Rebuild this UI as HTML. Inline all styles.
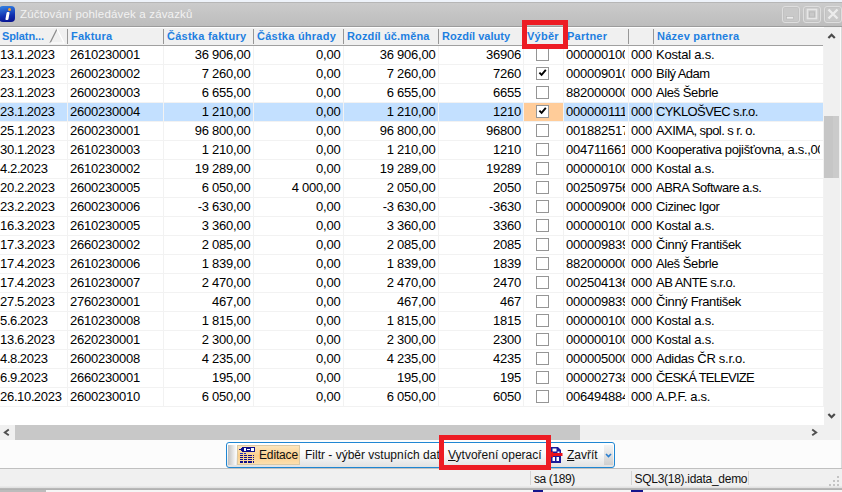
<!DOCTYPE html>
<html><head><meta charset="utf-8">
<style>
html,body{margin:0;padding:0;}
body{width:842px;height:492px;overflow:hidden;position:relative;background:#fff;font-family:"Liberation Sans",sans-serif;font-size:13px;letter-spacing:-0.23px;color:#000;}
#title{position:absolute;left:0;top:0;width:842px;height:27px;background:linear-gradient(#eef3fa 0,#eef3fa 2px,#b6b6b6 2px,#b6b6b6 3px,#cbcbcb 3px,#c4c4c4 14px,#bdbdbd 26px,#9c9c9c 26px,#9c9c9c 27px);}
#title .t{position:absolute;left:20px;top:7.5px;font-size:11.5px;color:#f2f2f2;letter-spacing:0.17px;white-space:nowrap;}
#ico{position:absolute;left:-1px;top:6px;width:16px;height:16px;border-radius:4px;background:linear-gradient(170deg,#2f78dc 10%,#1030b0 60%,#08108c);}
#ico b{position:absolute;left:9px;top:2px;width:3px;height:3px;background:#f6a02c;border-radius:2px;}
#ico u{position:absolute;left:7px;top:6px;width:3px;height:8px;background:#fff;transform:skewX(-10deg);border-radius:1px;}
.wb{position:absolute;top:6px;width:18px;height:17px;border:1px solid #dedede;border-radius:3px;background:#c9c9c9;box-sizing:border-box;box-shadow:inset 0 0 0 1px #c2c2c2;}
.wb svg{position:absolute;left:0;top:0;}
#grid{position:absolute;left:0;top:27px;width:824px;height:398px;background:#fff;overflow:hidden;}
.h{position:absolute;top:0px;height:19px;border-top:1px solid #fff;background:#f0f0f0;box-sizing:border-box;font-weight:bold;font-size:11px;letter-spacing:0.25px;color:#1e7fe0;white-space:nowrap;overflow:hidden;}
.h span{position:absolute;left:3px;top:2px;}
.h.last:after{display:none}
.h:after{content:"";position:absolute;right:0;top:1px;width:1px;height:15px;background:#979797;}
.row{position:absolute;left:0;width:823px;height:19px;margin-top:-27px;}
.c{position:absolute;top:0;height:19px;box-sizing:border-box;border-right:1px solid #f2f2f2;border-bottom:1px solid #f2f2f2;white-space:nowrap;overflow:hidden;}
.c span{position:absolute;top:1px;}
.c s{text-decoration:none;letter-spacing:-0.7px;}
.c.al span{left:2px;right:3px;overflow:hidden;}
.c.ar span{right:2.5px;}
.sel .c{background:#c3e0ff;}
.sel .c.foc{background:#ffcc99;}
.cb{position:absolute;left:12px;top:2px;width:13px;height:13px;box-sizing:border-box;border:1px solid #959595;background:#fff;}
.sel .cb,.cbw{background:#fff;}
.cb svg{position:absolute;left:0px;top:0px;}
.sort{position:absolute;left:49px;top:1px;}
#hline{position:absolute;left:0;top:18px;width:823px;height:1px;background:#a0a0a0;}
#vs{position:absolute;left:824px;top:27px;width:18px;height:398px;background:#f0f0f0;}
#vs .th{position:absolute;left:0px;top:89px;width:15px;height:62px;background:linear-gradient(90deg,#c6c6c6 0,#c6c6c6 9px,#cbcbcb 9px);}
#hs{position:absolute;left:0;top:425px;width:842px;height:15px;background:#f0f0f0;}
#hs .th{position:absolute;left:15px;top:0;width:565px;height:15px;background:#c8c8c8;}
#bar{position:absolute;left:0;top:440px;width:842px;height:28px;background:#fcfcfc;}
#status{position:absolute;left:0;top:468px;width:842px;height:19px;background:#f0f0f0;border-top:1px solid #c0c0c0;box-sizing:border-box;font-size:13px;}
#bot{position:absolute;left:0;top:486px;width:842px;height:6px;background:linear-gradient(#ececec 0,#dedede 2px,#b8b8b8 2.5px,#b0b0b0 3.7px,#f6f6f6 4px,#f6f6f6 6px);}
#bot i{position:absolute;top:4px;height:2px;background:#14148c;}

#tb{position:absolute;left:226px;top:442px;width:389px;height:26px;box-sizing:border-box;border:1px solid #1f86d2;border-radius:3px;background:linear-gradient(#ffffff 0,#fbfbfb 40%,#e2e2e2 100%);font-size:12px;letter-spacing:0;}
#tb .grip{position:absolute;left:1px;top:2px;width:8px;height:20px;background:linear-gradient(90deg,#c0c0c0,#fafafa);}
#tb .ed{position:absolute;left:10px;top:2px;width:63px;height:20px;box-sizing:border-box;border:1px solid #d9c9a6;background:linear-gradient(#fde6bd 0,#fbcf8c 55%,#fddfae 100%);}
#tb .tx{position:absolute;top:5px;white-space:nowrap;color:#111;}
#tb u{text-decoration:underline;}
#tb .dd{position:absolute;left:377px;top:2px;width:9px;height:20px;background:linear-gradient(#f4f4f4,#cfcfcf);}
#status .sep{position:absolute;top:2px;width:1px;height:14px;background:#d4d4d4;}
#status .tx{position:absolute;top:3px;white-space:nowrap;font-size:12px;letter-spacing:0;color:#111;}

.red{position:absolute;box-sizing:border-box;border:5px solid #ed1c24;}
</style></head><body>
<div id="title"><div id="ico"><b></b><u></u></div><div class="t">Zúčtování pohledávek a závazků</div>
<div class="wb" style="left:782px"><svg width="16" height="15" viewBox="0 0 16 15"><rect x="3.5" y="9.5" width="7" height="2.5" fill="#ececec" stroke="#b4b4b4" stroke-width="0.6"/></svg></div>
<div class="wb" style="left:803px"><svg width="16" height="15" viewBox="0 0 16 15"><rect x="3.5" y="2.5" width="9" height="9" fill="none" stroke="#e6e6e6" stroke-width="1.6"/><rect x="5.5" y="5" width="5" height="5" fill="none" stroke="#b8b8b8" stroke-width="0.8"/></svg></div>
<div class="wb" style="left:824px"><svg width="16" height="15" viewBox="0 0 16 15"><path d="M3.5 2.5 L12.5 11.5 M12.5 2.5 L3.5 11.5" stroke="#ececec" stroke-width="2.4" fill="none"/></svg></div></div>
<div id="grid">
<div class="h" style="left:-2px;width:70px"><span style="left:4px;letter-spacing:-0.1px">Splatn...</span></div>
<div class="h" style="left:68px;width:96px"><span>Faktura</span></div>
<div class="h" style="left:164px;width:90px"><span>Částka faktury</span></div>
<div class="h" style="left:254px;width:90px"><span>Částka úhrady</span></div>
<div class="h" style="left:344px;width:95px"><span style="letter-spacing:0.13px">Rozdíl úč.měna</span></div>
<div class="h" style="left:439px;width:85px"><span style="letter-spacing:0.02px">Rozdíl valuty</span></div>
<div class="h" style="left:524px;width:40px"><span>Výběr</span></div>
<div class="h" style="left:564px;width:65px"><span>Partner</span></div>
<div class="h" style="left:629px;width:25px"><span></span></div>
<div class="h last" style="left:654px;width:170px"><span>Název partnera</span></div>
<svg class="sort" width="22" height="18" viewBox="0 0 22 18"><path d="M1 15 L8 1" stroke="#8a8a8a" stroke-width="1.2" fill="none"/><path d="M8 1 L15 15 L1 15" stroke="#fff" stroke-width="1.2" fill="none"/></svg>
<div class="row" style="top:46px">
<div class="c al" style="left:-2px;width:70px"><span>13<s>.</s>1<s>.</s>2023</span></div>
<div class="c al" style="left:68px;width:96px"><span>2610230001</span></div>
<div class="c ar" style="left:164px;width:90px"><span>36 906,00</span></div>
<div class="c ar" style="left:254px;width:90px"><span>0,00</span></div>
<div class="c ar" style="left:344px;width:95px"><span>36 906,00</span></div>
<div class="c ar" style="left:439px;width:85px"><span style="right:2px">36906</span></div>
<div class="c ac" style="left:524px;width:40px"><i class="cb"></i></div>
<div class="c al" style="left:564px;width:65px"><span>000000100</span></div>
<div class="c al" style="left:629px;width:25px"><span style="right:1px">000</span></div>
<div class="c al" style="left:654px;width:170px"><span style="letter-spacing:-0.21px">Kostal a.s.</span></div>
</div>
<div class="row" style="top:65px">
<div class="c al" style="left:-2px;width:70px"><span>23<s>.</s>1<s>.</s>2023</span></div>
<div class="c al" style="left:68px;width:96px"><span>2600230002</span></div>
<div class="c ar" style="left:164px;width:90px"><span>7 260,00</span></div>
<div class="c ar" style="left:254px;width:90px"><span>0,00</span></div>
<div class="c ar" style="left:344px;width:95px"><span>7 260,00</span></div>
<div class="c ar" style="left:439px;width:85px"><span style="right:2px">7260</span></div>
<div class="c ac" style="left:524px;width:40px"><i class="cb"><svg width="11" height="11" viewBox="0 0 11 11"><path d="M2.4 4.6 L4.6 6.8 L8.8 1.9" stroke="#000" stroke-width="1.9" fill="none"/></svg></i></div>
<div class="c al" style="left:564px;width:65px"><span>000009010</span></div>
<div class="c al" style="left:629px;width:25px"><span style="right:1px">000</span></div>
<div class="c al" style="left:654px;width:170px"><span style="letter-spacing:-0.57px">Bílý Adam</span></div>
</div>
<div class="row" style="top:84px">
<div class="c al" style="left:-2px;width:70px"><span>23<s>.</s>1<s>.</s>2023</span></div>
<div class="c al" style="left:68px;width:96px"><span>2600230003</span></div>
<div class="c ar" style="left:164px;width:90px"><span>6 655,00</span></div>
<div class="c ar" style="left:254px;width:90px"><span>0,00</span></div>
<div class="c ar" style="left:344px;width:95px"><span>6 655,00</span></div>
<div class="c ar" style="left:439px;width:85px"><span style="right:2px">6655</span></div>
<div class="c ac" style="left:524px;width:40px"><i class="cb"></i></div>
<div class="c al" style="left:564px;width:65px"><span>882000000</span></div>
<div class="c al" style="left:629px;width:25px"><span style="right:1px">000</span></div>
<div class="c al" style="left:654px;width:170px"><span style="letter-spacing:-0.41px">Aleš Šebrle</span></div>
</div>
<div class="row sel" style="top:103px">
<div class="c al" style="left:-2px;width:70px"><span>23<s>.</s>1<s>.</s>2023</span></div>
<div class="c al" style="left:68px;width:96px"><span>2600230004</span></div>
<div class="c ar" style="left:164px;width:90px"><span>1 210,00</span></div>
<div class="c ar" style="left:254px;width:90px"><span>0,00</span></div>
<div class="c ar" style="left:344px;width:95px"><span>1 210,00</span></div>
<div class="c ar" style="left:439px;width:85px"><span style="right:2px">1210</span></div>
<div class="c ac foc" style="left:524px;width:40px"><i class="cb"><svg width="11" height="11" viewBox="0 0 11 11"><path d="M2.4 4.6 L4.6 6.8 L8.8 1.9" stroke="#000" stroke-width="1.9" fill="none"/></svg></i></div>
<div class="c al" style="left:564px;width:65px"><span>000000111</span></div>
<div class="c al" style="left:629px;width:25px"><span style="right:1px">000</span></div>
<div class="c al" style="left:654px;width:170px"><span style="letter-spacing:-0.6px">CYKLOŠVEC s.r.o.</span></div>
</div>
<div class="row" style="top:122px">
<div class="c al" style="left:-2px;width:70px"><span>25<s>.</s>1<s>.</s>2023</span></div>
<div class="c al" style="left:68px;width:96px"><span>2600230001</span></div>
<div class="c ar" style="left:164px;width:90px"><span>96 800,00</span></div>
<div class="c ar" style="left:254px;width:90px"><span>0,00</span></div>
<div class="c ar" style="left:344px;width:95px"><span>96 800,00</span></div>
<div class="c ar" style="left:439px;width:85px"><span style="right:2px">96800</span></div>
<div class="c ac" style="left:524px;width:40px"><i class="cb"></i></div>
<div class="c al" style="left:564px;width:65px"><span>001882517</span></div>
<div class="c al" style="left:629px;width:25px"><span style="right:1px">000</span></div>
<div class="c al" style="left:654px;width:170px"><span style="letter-spacing:-0.58px">AXIMA, spol. s r. o.</span></div>
</div>
<div class="row" style="top:141px">
<div class="c al" style="left:-2px;width:70px"><span>30<s>.</s>1<s>.</s>2023</span></div>
<div class="c al" style="left:68px;width:96px"><span>2610230003</span></div>
<div class="c ar" style="left:164px;width:90px"><span>1 210,00</span></div>
<div class="c ar" style="left:254px;width:90px"><span>0,00</span></div>
<div class="c ar" style="left:344px;width:95px"><span>1 210,00</span></div>
<div class="c ar" style="left:439px;width:85px"><span style="right:2px">1210</span></div>
<div class="c ac" style="left:524px;width:40px"><i class="cb"></i></div>
<div class="c al" style="left:564px;width:65px"><span>004711661</span></div>
<div class="c al" style="left:629px;width:25px"><span style="right:1px">000</span></div>
<div class="c al" style="left:654px;width:170px"><span style="letter-spacing:-0.35px">Kooperativa pojišťovna, a.s.,000</span></div>
</div>
<div class="row" style="top:160px">
<div class="c al" style="left:-2px;width:70px"><span>4<s>.</s>2<s>.</s>2023</span></div>
<div class="c al" style="left:68px;width:96px"><span>2610230002</span></div>
<div class="c ar" style="left:164px;width:90px"><span>19 289,00</span></div>
<div class="c ar" style="left:254px;width:90px"><span>0,00</span></div>
<div class="c ar" style="left:344px;width:95px"><span>19 289,00</span></div>
<div class="c ar" style="left:439px;width:85px"><span style="right:2px">19289</span></div>
<div class="c ac" style="left:524px;width:40px"><i class="cb"></i></div>
<div class="c al" style="left:564px;width:65px"><span>000000100</span></div>
<div class="c al" style="left:629px;width:25px"><span style="right:1px">000</span></div>
<div class="c al" style="left:654px;width:170px"><span style="letter-spacing:-0.21px">Kostal a.s.</span></div>
</div>
<div class="row" style="top:179px">
<div class="c al" style="left:-2px;width:70px"><span>20<s>.</s>2<s>.</s>2023</span></div>
<div class="c al" style="left:68px;width:96px"><span>2600230005</span></div>
<div class="c ar" style="left:164px;width:90px"><span>6 050,00</span></div>
<div class="c ar" style="left:254px;width:90px"><span>4 000,00</span></div>
<div class="c ar" style="left:344px;width:95px"><span>2 050,00</span></div>
<div class="c ar" style="left:439px;width:85px"><span style="right:2px">2050</span></div>
<div class="c ac" style="left:524px;width:40px"><i class="cb"></i></div>
<div class="c al" style="left:564px;width:65px"><span>002509756</span></div>
<div class="c al" style="left:629px;width:25px"><span style="right:1px">000</span></div>
<div class="c al" style="left:654px;width:170px"><span style="letter-spacing:-0.49px">ABRA Software a.s.</span></div>
</div>
<div class="row" style="top:198px">
<div class="c al" style="left:-2px;width:70px"><span>23<s>.</s>2<s>.</s>2023</span></div>
<div class="c al" style="left:68px;width:96px"><span>2600230006</span></div>
<div class="c ar" style="left:164px;width:90px"><span>-3 630,00</span></div>
<div class="c ar" style="left:254px;width:90px"><span>0,00</span></div>
<div class="c ar" style="left:344px;width:95px"><span>-3 630,00</span></div>
<div class="c ar" style="left:439px;width:85px"><span style="right:2px">-3630</span></div>
<div class="c ac" style="left:524px;width:40px"><i class="cb"></i></div>
<div class="c al" style="left:564px;width:65px"><span>000009006</span></div>
<div class="c al" style="left:629px;width:25px"><span style="right:1px">000</span></div>
<div class="c al" style="left:654px;width:170px"><span style="letter-spacing:-0.43px">Cizinec Igor</span></div>
</div>
<div class="row" style="top:217px">
<div class="c al" style="left:-2px;width:70px"><span>16<s>.</s>3<s>.</s>2023</span></div>
<div class="c al" style="left:68px;width:96px"><span>2610230005</span></div>
<div class="c ar" style="left:164px;width:90px"><span>3 360,00</span></div>
<div class="c ar" style="left:254px;width:90px"><span>0,00</span></div>
<div class="c ar" style="left:344px;width:95px"><span>3 360,00</span></div>
<div class="c ar" style="left:439px;width:85px"><span style="right:2px">3360</span></div>
<div class="c ac" style="left:524px;width:40px"><i class="cb"></i></div>
<div class="c al" style="left:564px;width:65px"><span>000000100</span></div>
<div class="c al" style="left:629px;width:25px"><span style="right:1px">000</span></div>
<div class="c al" style="left:654px;width:170px"><span style="letter-spacing:-0.21px">Kostal a.s.</span></div>
</div>
<div class="row" style="top:236px">
<div class="c al" style="left:-2px;width:70px"><span>17<s>.</s>3<s>.</s>2023</span></div>
<div class="c al" style="left:68px;width:96px"><span>2660230002</span></div>
<div class="c ar" style="left:164px;width:90px"><span>2 085,00</span></div>
<div class="c ar" style="left:254px;width:90px"><span>0,00</span></div>
<div class="c ar" style="left:344px;width:95px"><span>2 085,00</span></div>
<div class="c ar" style="left:439px;width:85px"><span style="right:2px">2085</span></div>
<div class="c ac" style="left:524px;width:40px"><i class="cb"></i></div>
<div class="c al" style="left:564px;width:65px"><span>000009839</span></div>
<div class="c al" style="left:629px;width:25px"><span style="right:1px">000</span></div>
<div class="c al" style="left:654px;width:170px"><span style="letter-spacing:-0.36px">Činný František</span></div>
</div>
<div class="row" style="top:255px">
<div class="c al" style="left:-2px;width:70px"><span>17<s>.</s>4<s>.</s>2023</span></div>
<div class="c al" style="left:68px;width:96px"><span>2610230006</span></div>
<div class="c ar" style="left:164px;width:90px"><span>1 839,00</span></div>
<div class="c ar" style="left:254px;width:90px"><span>0,00</span></div>
<div class="c ar" style="left:344px;width:95px"><span>1 839,00</span></div>
<div class="c ar" style="left:439px;width:85px"><span style="right:2px">1839</span></div>
<div class="c ac" style="left:524px;width:40px"><i class="cb"></i></div>
<div class="c al" style="left:564px;width:65px"><span>882000000</span></div>
<div class="c al" style="left:629px;width:25px"><span style="right:1px">000</span></div>
<div class="c al" style="left:654px;width:170px"><span style="letter-spacing:-0.41px">Aleš Šebrle</span></div>
</div>
<div class="row" style="top:274px">
<div class="c al" style="left:-2px;width:70px"><span>17<s>.</s>4<s>.</s>2023</span></div>
<div class="c al" style="left:68px;width:96px"><span>2610230007</span></div>
<div class="c ar" style="left:164px;width:90px"><span>2 470,00</span></div>
<div class="c ar" style="left:254px;width:90px"><span>0,00</span></div>
<div class="c ar" style="left:344px;width:95px"><span>2 470,00</span></div>
<div class="c ar" style="left:439px;width:85px"><span style="right:2px">2470</span></div>
<div class="c ac" style="left:524px;width:40px"><i class="cb"></i></div>
<div class="c al" style="left:564px;width:65px"><span>002504136</span></div>
<div class="c al" style="left:629px;width:25px"><span style="right:1px">000</span></div>
<div class="c al" style="left:654px;width:170px"><span style="letter-spacing:-0.53px">AB ANTE s.r.o.</span></div>
</div>
<div class="row" style="top:293px">
<div class="c al" style="left:-2px;width:70px"><span>27<s>.</s>5<s>.</s>2023</span></div>
<div class="c al" style="left:68px;width:96px"><span>2760230001</span></div>
<div class="c ar" style="left:164px;width:90px"><span>467,00</span></div>
<div class="c ar" style="left:254px;width:90px"><span>0,00</span></div>
<div class="c ar" style="left:344px;width:95px"><span>467,00</span></div>
<div class="c ar" style="left:439px;width:85px"><span style="right:2px">467</span></div>
<div class="c ac" style="left:524px;width:40px"><i class="cb"></i></div>
<div class="c al" style="left:564px;width:65px"><span>000009839</span></div>
<div class="c al" style="left:629px;width:25px"><span style="right:1px">000</span></div>
<div class="c al" style="left:654px;width:170px"><span style="letter-spacing:-0.36px">Činný František</span></div>
</div>
<div class="row" style="top:312px">
<div class="c al" style="left:-2px;width:70px"><span>5<s>.</s>6<s>.</s>2023</span></div>
<div class="c al" style="left:68px;width:96px"><span>2610230008</span></div>
<div class="c ar" style="left:164px;width:90px"><span>1 815,00</span></div>
<div class="c ar" style="left:254px;width:90px"><span>0,00</span></div>
<div class="c ar" style="left:344px;width:95px"><span>1 815,00</span></div>
<div class="c ar" style="left:439px;width:85px"><span style="right:2px">1815</span></div>
<div class="c ac" style="left:524px;width:40px"><i class="cb"></i></div>
<div class="c al" style="left:564px;width:65px"><span>000000100</span></div>
<div class="c al" style="left:629px;width:25px"><span style="right:1px">000</span></div>
<div class="c al" style="left:654px;width:170px"><span style="letter-spacing:-0.21px">Kostal a.s.</span></div>
</div>
<div class="row" style="top:331px">
<div class="c al" style="left:-2px;width:70px"><span>13<s>.</s>6<s>.</s>2023</span></div>
<div class="c al" style="left:68px;width:96px"><span>2620230001</span></div>
<div class="c ar" style="left:164px;width:90px"><span>2 300,00</span></div>
<div class="c ar" style="left:254px;width:90px"><span>0,00</span></div>
<div class="c ar" style="left:344px;width:95px"><span>2 300,00</span></div>
<div class="c ar" style="left:439px;width:85px"><span style="right:2px">2300</span></div>
<div class="c ac" style="left:524px;width:40px"><i class="cb"></i></div>
<div class="c al" style="left:564px;width:65px"><span>000000100</span></div>
<div class="c al" style="left:629px;width:25px"><span style="right:1px">000</span></div>
<div class="c al" style="left:654px;width:170px"><span style="letter-spacing:-0.21px">Kostal a.s.</span></div>
</div>
<div class="row" style="top:350px">
<div class="c al" style="left:-2px;width:70px"><span>4<s>.</s>8<s>.</s>2023</span></div>
<div class="c al" style="left:68px;width:96px"><span>2600230008</span></div>
<div class="c ar" style="left:164px;width:90px"><span>4 235,00</span></div>
<div class="c ar" style="left:254px;width:90px"><span>0,00</span></div>
<div class="c ar" style="left:344px;width:95px"><span>4 235,00</span></div>
<div class="c ar" style="left:439px;width:85px"><span style="right:2px">4235</span></div>
<div class="c ac" style="left:524px;width:40px"><i class="cb"></i></div>
<div class="c al" style="left:564px;width:65px"><span>000005000</span></div>
<div class="c al" style="left:629px;width:25px"><span style="right:1px">000</span></div>
<div class="c al" style="left:654px;width:170px"><span style="letter-spacing:-0.29px">Adidas ČR s.r.o.</span></div>
</div>
<div class="row" style="top:369px">
<div class="c al" style="left:-2px;width:70px"><span>6<s>.</s>9<s>.</s>2023</span></div>
<div class="c al" style="left:68px;width:96px"><span>2660230001</span></div>
<div class="c ar" style="left:164px;width:90px"><span>195,00</span></div>
<div class="c ar" style="left:254px;width:90px"><span>0,00</span></div>
<div class="c ar" style="left:344px;width:95px"><span>195,00</span></div>
<div class="c ar" style="left:439px;width:85px"><span style="right:2px">195</span></div>
<div class="c ac" style="left:524px;width:40px"><i class="cb"></i></div>
<div class="c al" style="left:564px;width:65px"><span>000002738</span></div>
<div class="c al" style="left:629px;width:25px"><span style="right:1px">000</span></div>
<div class="c al" style="left:654px;width:170px"><span style="letter-spacing:-0.79px">ČESKÁ TELEVIZE</span></div>
</div>
<div class="row" style="top:388px">
<div class="c al" style="left:-2px;width:70px"><span>26<s>.</s>10<s>.</s>2023</span></div>
<div class="c al" style="left:68px;width:96px"><span>2600230010</span></div>
<div class="c ar" style="left:164px;width:90px"><span>6 050,00</span></div>
<div class="c ar" style="left:254px;width:90px"><span>0,00</span></div>
<div class="c ar" style="left:344px;width:95px"><span>6 050,00</span></div>
<div class="c ar" style="left:439px;width:85px"><span style="right:2px">6050</span></div>
<div class="c ac" style="left:524px;width:40px"><i class="cb"></i></div>
<div class="c al" style="left:564px;width:65px"><span>006494884</span></div>
<div class="c al" style="left:629px;width:25px"><span style="right:1px">000</span></div>
<div class="c al" style="left:654px;width:170px"><span style="letter-spacing:-0.32px">A.P.F. a.s.</span></div>
</div>
<div id="hline"></div>
</div>
<div id="vs"><div class="th"></div>
<svg style="position:absolute;left:3px;top:5px" width="10" height="8" viewBox="0 0 10 8"><path d="M1.4 6 L4.6 2.8 L7.8 6" stroke="#4a4a4a" stroke-width="2.2" fill="none"/></svg>
<svg style="position:absolute;left:3px;top:385px" width="10" height="8" viewBox="0 0 10 8"><path d="M1.4 2 L4.6 5.2 L7.8 2" stroke="#4a4a4a" stroke-width="2.2" fill="none"/></svg>
</div>
<div id="hs"><div class="th"></div>
<svg style="position:absolute;left:2px;top:3px" width="8" height="10" viewBox="0 0 8 10"><path d="M6.8 1.5 L2.8 4.4 L6.8 7.3" stroke="#505050" stroke-width="1.9" fill="none"/></svg>
<svg style="position:absolute;left:811px;top:3px" width="8" height="10" viewBox="0 0 8 10"><path d="M1.2 1.5 L5.2 4.4 L1.2 7.3" stroke="#505050" stroke-width="1.9" fill="none"/></svg>
</div>
<div id="bar"></div>
<div id="tb"><div class="grip"></div><div class="ed"></div>
<svg style="position:absolute;left:12px;top:4px" width="16" height="16" viewBox="0 0 16 16" shape-rendering="crispEdges">
<path d="M0 2h2v1h-2z M2 1h1v3h-1z" fill="#10108a"/>
<rect x="3" y="0" width="13" height="5" fill="#10108a"/><rect x="5" y="1" width="2" height="3" fill="#fff"/><rect x="8" y="2" width="3" height="1" fill="#fff"/><rect x="12" y="1" width="3" height="3" fill="#fff"/>
<g fill="#2030c0"><rect x="1" y="6" width="3" height="1"/><rect x="5" y="6" width="2" height="1"/></g>
<g fill="#10108a">
<rect x="1" y="8" width="3" height="1"/><rect x="5" y="8" width="3" height="1"/><rect x="9" y="8" width="4" height="1"/><rect x="14" y="8" width="1" height="1"/>
<rect x="1" y="10" width="3" height="1"/><rect x="5" y="10" width="3" height="1"/><rect x="9" y="10" width="4" height="1"/><rect x="14" y="10" width="1" height="1"/>
<rect x="1" y="12" width="3" height="1"/><rect x="5" y="12" width="3" height="1"/><rect x="9" y="12" width="4" height="1"/><rect x="14" y="12" width="1" height="1"/>
<rect x="1" y="14" width="3" height="2"/><rect x="5" y="14" width="3" height="2"/><rect x="9" y="14" width="4" height="2"/><rect x="14" y="14" width="1" height="2"/>
</g></svg>
<div class="tx" id="t1" style="left:32px;letter-spacing:-0.15px">Editace</div>
<div class="tx" id="t2" style="left:78px">Filtr - výběr vstupních dat</div>
<div class="tx" id="t3" style="left:221px"><u>V</u>ytvoření operací</div>
<svg style="position:absolute;left:321px;top:4px" width="16" height="16" viewBox="0 0 16 16">
<path d="M3 0 H10 L13 3 V16 H3 Z" fill="#1a1a9a"/><path d="M4.5 1.5h4v3h-4z M9.5 4.5h2v1.5h-2z M4.5 10h2.5v4h-2.5z M8.5 10h2.5v4h-2.5z" fill="#fff"/>
<path d="M0 7.5 L5 4 V6 H14.5 V9 H5 V11 Z" fill="#e8101c"/></svg>
<div class="tx" id="t4" style="left:340px"><u>Z</u>avřít</div>
<div class="dd"><svg style="position:absolute;left:0;top:8px" width="9" height="7" viewBox="0 0 9 7"><path d="M2 1 L4.5 3.6 L7 1" stroke="#2a7fd0" stroke-width="1.6" fill="none"/></svg></div>
</div>
<div id="status"><div class="sep" style="left:530px"></div><div class="sep" style="left:631px"></div><div class="sep" style="left:748px"></div>
<div class="tx" id="s1" style="left:534px;letter-spacing:-0.4px">sa (189)</div><div class="tx" id="s2" style="left:634.5px;letter-spacing:-0.28px">SQL3(18).idata_demo</div>
<svg style="position:absolute;left:829px;top:7px" width="12" height="12" viewBox="0 0 12 12" shape-rendering="crispEdges"><g fill="#c4c4c4"><rect x="8" y="0" width="2" height="2"/><rect x="4" y="4" width="2" height="2"/><rect x="8" y="4" width="2" height="2"/><rect x="0" y="8" width="2" height="2"/><rect x="4" y="8" width="2" height="2"/><rect x="8" y="8" width="2" height="2"/></g></svg>
</div>
<div id="bot"><i style="left:0;width:46px;background:#bcbcbc"></i><i style="left:533px;width:10px"></i><i style="left:631px;width:12px"></i></div>
<div style="position:absolute;left:840px;top:27px;width:1px;height:441px;background:#fafafa"></div><div style="position:absolute;left:841px;top:27px;width:1px;height:441px;background:#d8d8d8"></div>
<div class="red" style="left:522px;top:20px;width:46px;height:29px"></div>
<div class="red" style="left:439px;top:435px;width:112px;height:35px"></div>
</body></html>
